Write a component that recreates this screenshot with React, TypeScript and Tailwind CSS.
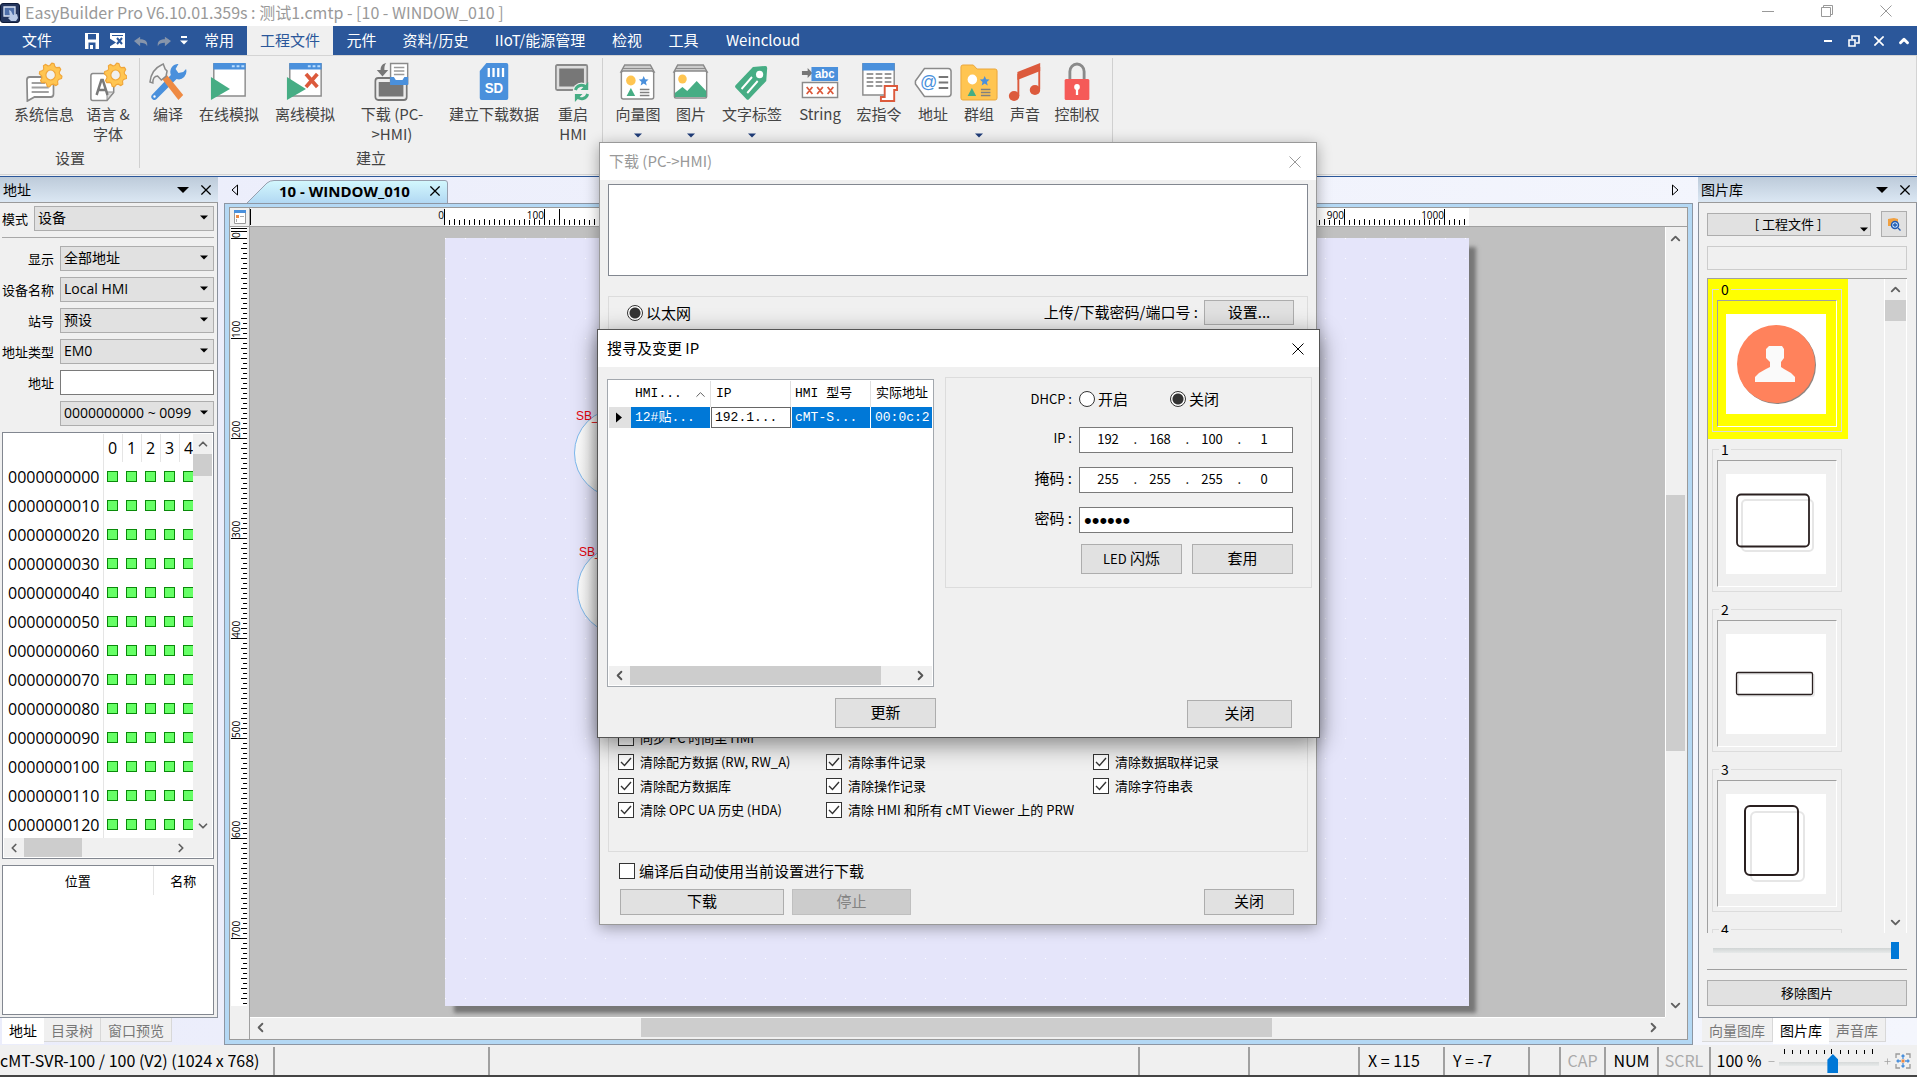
import type { ReactNode } from 'react';
import { ChevronDown, ChevronLeft, ChevronRight, ChevronUp, Minus, Plus } from 'lucide-react';

// outline of an eight-toothed wheel around the origin
const gearOutline = Array.from({ length: 32 }, (_, i) => {
  const angle = (i / 32) * Math.PI * 2 + 0.1;
  const radius = i % 4 < 2 ? 12 : 9.5;
  return `${(Math.cos(angle) * radius).toFixed(1)} ${(Math.sin(angle) * radius).toFixed(1)}`;
}).join('L');

function Gear({ x, y }: { x: number; y: number }) {
  return (
    <g transform={`translate(${x} ${y})`} stroke="#f0a63a" strokeLinejoin="round">
      <path d={`M${gearOutline}Z`} fill="#ffc551" strokeWidth="1.2" />
      <circle r="5" fill="#f0f0f0" strokeWidth="1.2" />
    </g>
  );
}

function Cross({ size, weight = 1 }: { size: number; weight?: number }) {
  return (
    <svg width={size} height={size} viewBox="0 0 12 12" fill="none" stroke="currentColor">
      <path d="M.5 .5l11 11M11.5 .5l-11 11" strokeWidth={weight} />
    </svg>
  );
}

function Shapes() {
  return (
    <>
      <path d="M26 14l1.5 3.3 3.6.3-2.8 2.3.9 3.5-3.2-1.9-3.2 1.9.9-3.5-2.8-2.3 3.6-.3z" fill="#4a90dc" />
      <path d="M12.5 26l4.5 8H8z" fill="#46ad84" />
      <path d="M22 27.5h10M22 30.5h10M22 33.5h10" stroke="#808080" strokeWidth="1.6" />
    </>
  );
}

const icons: Record<string, ReactNode> = {
  info: (
    <>
      <path d="M2 18a3 3 0 0 1 3-3h22a3 3 0 0 1 3 3v14a3 3 0 0 1-3 3H10l-7.500 4z" fill="#fff" stroke="#8a8a8a" strokeWidth="1.8" />
      <path d="M7 21h14M7 25.500h18M7 30h18" stroke="#a0a0a0" strokeWidth="1.8" />
      <Gear x={27} y={13} />
    </>
  ),
  language: (
    <>
      <path d="M2 13.500a2 2 0 0 1 2-2h22v19l-7 8H4a2 2 0 0 1-2-2z" fill="#fff" stroke="#8a8a8a" strokeWidth="1.600" />
      <path d="M26 30l-7 8v-8z" fill="#ddd" stroke="#8a8a8a" />
      <path d="M8 33l5-15h1.500l5 15M10 28h7.500" fill="none" stroke="#7a7a7a" strokeWidth="2.600" />
      <Gear x={28} y={13} />
    </>
  ),
  compile: (
    <>
      <path d="M4 37.500a3.200 3.200 0 0 1-1-4.500L23 13a8 8 0 0 1 8-11l-3 5 3 4 5-1 3-3a8 8 0 0 1-10 10L8 37a3.200 3.200 0 0 1-4 .5z" fill="#4a90dc" />
      <circle cx="5.800" cy="34.500" r="1.200" fill="#fff" />
      <path d="M13 16l5-4 18 21-5 5z" fill="#ee8a43" />
      <path d="M1 20c1-8 5-14 12-17l2-1 2 5 2 2-1 5-5 4-4-4c-3 0-5 2-5 7z" fill="#f4f4f4" stroke="#8a8a8a" strokeWidth="1.600" />
    </>
  ),
  online: (
    <>
      <path d="M4 2h33v32H4z" fill="#fff" stroke="#8a8a8a" strokeWidth="1.500" />
      <path d="M3.500 1h34v6.500h-34z" fill="#4a90dc" />
      <path d="M23 4.300h3M28 4.300h3M33 4.300h3" stroke="#b8dcff" strokeWidth="2" />
      <path d="M1 15l20 12L1 38z" fill="#46ad84" />
    </>
  ),
  offline: (
    <>
      <path d="M4 2h33v32H4z" fill="#fff" stroke="#8a8a8a" strokeWidth="1.500" />
      <path d="M3.500 1h34v6.500h-34z" fill="#4a90dc" />
      <path d="M23 4.300h3M28 4.300h3M33 4.300h3" stroke="#b8dcff" strokeWidth="2" />
      <path d="M1 15l20 12L1 38z" fill="#46ad84" />
      <path d="M21 12l12 13M33 12L21 25" stroke="#dc5a3c" strokeWidth="4" />
    </>
  ),
  download: (
    <>
      <rect x="2.500" y="16" width="33" height="22" rx="3" fill="#ececec" stroke="#777" strokeWidth="1.800" />
      <rect x="6" y="20" width="26" height="14.500" fill="#777" />
      <path d="M18.500 1.500h18v20h-18z" fill="#fff" stroke="#8a8a8a" strokeWidth="1.500" />
      <path d="M22 5.500h11M22 9h11M22 12.500h11" stroke="#9a9a9a" strokeWidth="1.500" />
      <path d="M18 15h4l2 3h7l2-3h4v8H18z" fill="#4a90dc" />
      <path d="M14 1C9 2 8 5 8 8H4l6 6.500L16 8h-4c0-3 0-5 2-7z" fill="#777" />
    </>
  ),
  sd: (
    <>
      <path d="M12 1h21a2 2 0 0 1 2 2v33a2 2 0 0 1-2 2H7a2 2 0 0 1-2-2V9z" fill="#4a90dc" />
      <path d="M14.500 6v9M19.500 6v9M24.500 6v9M29.500 6v9" stroke="#fff" strokeWidth="2.400" />
      <text x="20" y="31.500" textAnchor="middle" fontSize="14" fontWeight="700" fontFamily="Liberation Sans, sans-serif" fill="#fff">SD</text>
    </>
  ),
  restart: (
    <>
      <rect x="2" y="3" width="33" height="25" rx="1.500" fill="#ddd" stroke="#8a8a8a" strokeWidth="1.800" />
      <rect x="5.500" y="6.500" width="26" height="18" fill="#777" />
      <circle cx="29" cy="30" r="9.500" fill="#f0f0f0" />
      <path d="M22.500 28a6.800 6.800 0 0 1 11-3M35.500 32a6.800 6.800 0 0 1-11 3" fill="none" stroke="#46ad84" strokeWidth="3" />
      <path d="M36 20v8h-8zM22 40v-8h8z" fill="#46ad84" />
    </>
  ),
  vector: (
    <>
      <path d="M6 3h27l4 7H2z" fill="#ccc" stroke="#8a8a8a" strokeWidth="1.500" />
      <path d="M4 6.500h31" stroke="#8a8a8a" />
      <rect x="2.500" y="9" width="34" height="28" rx="2" fill="#fff" stroke="#8a8a8a" strokeWidth="1.500" />
      <circle cx="12.500" cy="18.500" r="5" fill="#ffc551" />
      <Shapes />
    </>
  ),
  picture: (
    <>
      <path d="M6 3h27l4 7H2z" fill="#ccc" stroke="#8a8a8a" strokeWidth="1.500" />
      <path d="M4 6.500h31" stroke="#8a8a8a" />
      <rect x="2.500" y="9" width="34" height="27" rx="1.500" fill="#fff" stroke="#8a8a8a" strokeWidth="1.500" />
      <circle cx="11" cy="17" r="4.500" fill="#ffc551" />
      <path d="M3 31l8-6 5 4 10-10 10 10v6H3z" fill="#46ad84" />
    </>
  ),
  tag: (
    <>
      <path d="M21 5l13-1a2 2 0 0 1 2 2l-1 13-18 18a2 2 0 0 1-3 0L3 26a2 2 0 0 1 0-3z" fill="#46ad84" />
      <circle cx="28" cy="12.500" r="3.800" fill="#fff" />
      <path d="M9 27l11-12M15 31l11-12" stroke="#fff" strokeWidth="2" />
    </>
  ),
  text: (
    <>
      <path d="M1 9h6V6l5 5-5 5v-3H1z" fill="#777" />
      <path d="M11 5h28v14H11z" fill="#4a90dc" />
      <text x="25" y="16" textAnchor="middle" fontSize="12" fontWeight="700" fontFamily="Liberation Sans, sans-serif" fill="#fff">abc</text>
      <path d="M1.500 20.500h37v15h-37z" fill="#fff" stroke="#8a8a8a" strokeWidth="1.500" />
      <path d="M6 25l6 7M12 25l-6 7M17 25l6 7M23 25l-6 7M28 25l6 7M34 25l-6 7" stroke="#dc5a3c" strokeWidth="1.900" />
    </>
  ),
  macro: (
    <>
      <path d="M3 2h33v31H3z" fill="#fff" stroke="#8a8a8a" strokeWidth="1.500" />
      <path d="M2.500 1h34v7.500h-34z" fill="#4a90dc" />
      <path d="M7 12h26M7 16h26M7 20h26M7 24h17" stroke="#999" strokeWidth="1.800" strokeDasharray="7 2.500" />
      <path d="M26 24h13v4h-3v11H22v-4h4z" fill="#fff" stroke="#dc5a3c" strokeWidth="2" />
    </>
  ),
  address: (
    <>
      <path d="M11 6.500h25a3 3 0 0 1 3 3v22a3 3 0 0 1-3 3H11L1.500 22v-3z" fill="#fff" stroke="#8a8a8a" strokeWidth="1.600" />
      <text x="15.500" y="26" textAnchor="middle" fontSize="18" fontFamily="Liberation Sans, sans-serif" fill="#4a90dc">@</text>
      <path d="M26 15h10M26 20.500h10M26 26h10" stroke="#777" strokeWidth="2" />
    </>
  ),
  group: (
    <>
      <path d="M1 5a2 2 0 0 1 2-2h11l4 4h19a2 2 0 0 1 2 2v27a2 2 0 0 1-2 2H3a2 2 0 0 1-2-2z" fill="#ffc551" stroke="#eaa63a" />
      <circle cx="13" cy="17.500" r="5" fill="#fff" />
      <Shapes />
    </>
  ),
  sound: (
    <>
      <path d="M12 10L36 1v8l-24 9z" fill="#dc5a3c" />
      <path d="M13 12v22M35 5v22" stroke="#dc5a3c" strokeWidth="2" />
      <ellipse cx="8.500" cy="34" rx="5.500" ry="5" fill="#dc5a3c" />
      <ellipse cx="30.500" cy="28" rx="5.500" ry="5" fill="#dc5a3c" />
    </>
  ),
  lock: (
    <>
      <path d="M12.500 19V9.500a7.500 7.500 0 0 1 15 0V19" fill="none" stroke="#8a8a8a" strokeWidth="3" />
      <rect x="7" y="17" width="26" height="21" rx="1.500" fill="#f55a58" />
      <circle cx="20" cy="25" r="3" fill="#fff" />
      <path d="M20 25v8" stroke="#fff" strokeWidth="2.400" />
    </>
  ),
};

type Tool = { icon: string; label: ReactNode; width: string; menu?: boolean };

const groups: { title: string; className: string; tools: Tool[] }[] = [
  {
    title: '设置',
    className: 'pl-2 pr-[3px]',
    tools: [
      { icon: 'info', label: '系统信息', width: 'w-[72px]' },
      { icon: 'language', label: <>语言 &amp;<br />字体</>, width: 'w-14' },
    ],
  },
  {
    title: '建立',
    className: 'pl-[6px] pr-[2px]',
    tools: [
      { icon: 'compile', label: '编译', width: 'w-11' },
      { icon: 'online', label: '在线模拟', width: 'w-[78px]' },
      { icon: 'offline', label: '离线模拟', width: 'w-[74px]' },
      { icon: 'download', label: <>下载 (PC-<br />&gt;HMI)</>, width: 'w-[100px]' },
      { icon: 'sd', label: '建立下载数据', width: 'w-[104px]' },
      { icon: 'restart', label: <>重启<br />HMI</>, width: 'w-[54px]' },
    ],
  },
  {
    title: '',
    className: 'pl-2 pr-[11px]',
    tools: [
      { icon: 'vector', label: '向量图', width: 'w-[54px]', menu: true },
      { icon: 'picture', label: '图片', width: 'w-[52px]', menu: true },
      { icon: 'tag', label: '文字标签', width: 'w-[70px]', menu: true },
      { icon: 'text', label: 'String', width: 'w-[66px]' },
      { icon: 'macro', label: '宏指令', width: 'w-[52px]' },
      { icon: 'address', label: '地址', width: 'w-14' },
      { icon: 'group', label: '群组', width: 'w-9', menu: true },
      { icon: 'sound', label: '声音', width: 'w-14' },
      { icon: 'lock', label: '控制权', width: 'w-12' },
    ],
  },
];

function Caret({ className = '' }: { className?: string }) {
  return (
    <svg viewBox="0 0 10 5" className={`h-[5px] w-2 ${className}`}>
      <path d="M0 0h10L5 5z" fill="currentColor" />
    </svg>
  );
}

function TitleBar() {
  return (
    <header className="flex h-[26px] shrink-0 items-center bg-white text-[#999]">
      <svg viewBox="0 0 20 20" className="h-5 w-5">
        <rect x=".5" y=".5" width="19" height="19" rx="2.500" fill="#24365e" stroke="#0d1a38" />
        <path d="M4 4h11v9H4z" fill="#4f6fa8" stroke="#dbe5f5" strokeWidth="1.300" />
        <path d="M9 7l2 1 2 4 4-1 1 4-2 3h-5l-3-3 2-1z" fill="#b9cbe8" />
      </svg>
      <h1 className="ml-[5px] pb-0.5 text-base leading-6">EasyBuilder Pro V6.10.01.359s : 测试1.cmtp - [10 - WINDOW_010 ]</h1>
      <div className="ml-auto flex items-center gap-[46px] pr-[25px] pb-1">
        <button aria-label="最小化" className="h-px w-3 bg-[#999]" />
        <button aria-label="还原">
          <svg viewBox="0 0 14 14" className="h-3.5 w-3.5" fill="none" stroke="currentColor">
            <path d="M1.500 3.500h9v9h-9zM3.500 3V1.500h9v9H11" />
          </svg>
        </button>
        <button aria-label="关闭窗口"><Cross size={12} /></button>
      </div>
    </header>
  );
}

function MenuBar() {
  return (
    <nav className="flex h-[29px] shrink-0 items-stretch bg-[#2b579a] text-[15px] text-white">
      <button className="w-[74px]">文件</button>
      <div className="flex w-[117px] items-center gap-[9px] pl-[10px]">
        <button aria-label="保存">
          <svg viewBox="0 0 16 16" className="h-4 w-4">
            <path d="M1 0h14v16H1z" fill="#fff" />
            <path d="M4 1h8v5.500H4zM4.500 9.500h7V16h-7z" fill="#2b579a" />
            <path d="M6 12h3v4H6z" fill="#fff" />
          </svg>
        </button>
        <button aria-label="编译并模拟">
          <svg viewBox="0 0 16 16" className="h-4 w-4">
            <path d="M1 0h15v15H1z" fill="#fff" />
            <path d="M0 5l7 4.500L0 14zM3 2h11v1H3z" fill="#2b579a" />
            <path d="M8 5l5 6M13 5l-5 6" stroke="#2b579a" strokeWidth="2" />
          </svg>
        </button>
        <button aria-label="撤消" className="text-[#8795ab]">
          <svg viewBox="0 0 16 16" className="h-4 w-3.5" fill="currentColor"><path d="M0 8l7-5v3c6 0 9 3 8 8-1-3-4-4-8-4v4z" /></svg>
        </button>
        <button aria-label="重做" className="text-[#8795ab]">
          <svg viewBox="0 0 16 16" className="h-4 w-3.5" fill="currentColor"><path d="M16 8L9 3v3C3 6 0 9 1 14c1-3 4-4 8-4v4z" /></svg>
        </button>
        <button aria-label="自定义工具栏" className="flex flex-col items-center gap-0.5">
          <span className="h-0.5 w-1.5 bg-white" />
          <Caret />
        </button>
      </div>
      <button className="w-14">常用</button>
      <button className="w-[86px] bg-[#f0f0f0] text-[#2b579a]">工程文件</button>
      <button className="w-[57px]">元件</button>
      <button className="w-[91px]">资料/历史</button>
      <button className="w-[118px]">IIoT/能源管理</button>
      <button className="w-14">检视</button>
      <button className="w-[57px]">工具</button>
      <button className="w-[102px]">Weincloud</button>
      <div className="ml-auto flex items-center gap-[13px] pr-[6px]">
        <button aria-label="最小化文档" className="h-0.5 w-2 bg-white" />
        <button aria-label="还原文档" className="ml-0.5">
          <svg viewBox="0 0 14 14" className="h-3.5 w-3.5" fill="none" stroke="#fff" strokeWidth="1.600">
            <path d="M2 6h6v6H2zM5 5V2h7v7h-3" />
          </svg>
        </button>
        <button aria-label="关闭文档"><Cross size={10} weight={2} /></button>
        <button aria-label="收起功能区"><ChevronUp size={14} strokeWidth={5} /></button>
      </div>
    </nav>
  );
}

function Ribbon() {
  return (
    <section className="flex h-[122px] shrink-0 border-b border-[#2b579a] bg-[#f0f0f0] text-[15px] text-[#444]">
      <div className="mb-px flex flex-1 border-y border-r border-[#d4d4d4] pt-0.5 pb-1.5">
        {groups.map((group, i) => (
          <div key={i} className={`flex flex-col border-r border-[#d0d0d0] ${group.className}`}>
            <div className="flex flex-1">
              {group.tools.map((tool) => (
                <button key={tool.icon} className={`flex shrink-0 flex-col items-center pt-1 ${tool.width}`}>
                  <svg viewBox="0 0 40 40" className="h-10 w-[38px] shrink-0" preserveAspectRatio="none">{icons[tool.icon]}</svg>
                  <span className="mt-0.5 leading-5 whitespace-nowrap">{tool.label}</span>
                  {tool.menu && <Caret className="mt-[9px] text-[#1f3c78]" />}
                </button>
              ))}
            </div>
            <h2 className="h-5 pr-1 text-center leading-5">{group.title}</h2>
          </div>
        ))}
      </div>
    </section>
  );
}

function PanelHeader({ title }: { title: string }) {
  return (
    <div className="flex h-[26px] shrink-0 items-center border-b border-[#9a9a9a] bg-linear-to-b from-[#bdcbda] to-[#dbe7f3] pr-[7px] pl-[3px] text-sm">
      <h2 className="pb-0.5">{title}</h2>
      <button aria-label={`${title}选项`} className="ml-auto">
        <svg viewBox="0 0 12 6" className="h-1.5 w-3"><path d="M0 0h12L6 6z" /></svg>
      </button>
      <button aria-label={`关闭${title}`} className="ml-3"><Cross size={10} weight={1.5} /></button>
    </div>
  );
}

function Select({ id, value, label }: { id: string; value: string; label?: string }) {
  return (
    <div className="grid min-w-0 flex-1 items-center">
      <select id={id} aria-label={label} className="col-start-1 row-start-1 h-[25px] w-full min-w-0 appearance-none border border-[#adadad] bg-[#e1e1e1] pb-px pl-[3px] font-['Open_Sans','Noto_Sans_CJK_SC',sans-serif] text-sm leading-5">
        <option>{value}</option>
      </select>
      <Caret className="pointer-events-none col-start-1 row-start-1 mr-1.5 mb-0.5 justify-self-end" />
    </div>
  );
}

const fields = [
  { id: 'display', label: '显示', value: '全部地址' },
  { id: 'device', label: '设备名称', value: 'Local HMI' },
  { id: 'station', label: '站号', value: '预设' },
  { id: 'addressType', label: '地址类型', value: 'EM0' },
];

const addressRows = Array.from({ length: 13 }, (_, i) => String(i * 10).padStart(10, '0'));

function AddressPanel() {
  return (
    <aside className="flex w-[218px] shrink-0 flex-col">
      <PanelHeader title="地址" />
      <div className="flex min-h-0 flex-1 flex-col border-r border-b border-[#8a919c] bg-[#f0f0f0] pt-[3px] pr-[3px] pb-0.5 pl-0.5 text-[13px]">
        <div className="flex items-center border-b border-[#a8a8a8] pb-1.5">
          <label htmlFor="mode" className="w-8">模式</label>
          <Select id="mode" value="设备" />
        </div>
        <div className="flex flex-col gap-1.5 pt-2 pb-1.5">
          {fields.map((field) => (
            <div key={field.id} className="flex items-center">
              <label htmlFor={field.id} className="w-[58px] shrink-0 pr-1.5 text-right whitespace-nowrap">{field.label}</label>
              <Select id={field.id} value={field.value} />
            </div>
          ))}
          <div className="flex items-center">
            <label htmlFor="address" className="w-[58px] shrink-0 pr-1.5 text-right">地址</label>
            <input id="address" className="h-[25px] min-w-0 flex-1 border border-[#7a7a7a] bg-white px-1" />
          </div>
          <div className="flex pl-[58px]">
            <Select id="range" value="0000000000 ~ 0099" label="地址范围" />
          </div>
        </div>
        <div className="shrink-0 border border-[#828790] bg-white p-px font-['Open_Sans',sans-serif]">
          <div className="flex h-[404px]">
            <div className="flex-1 overflow-hidden">
              <table className="w-[208px] table-fixed border-collapse text-base leading-5">
                <thead>
                  <tr className="h-7">
                    <th className="w-[99px] border-r border-[#e5e5e5]" />
                    {[0, 1, 2, 3, 4].map((n) => (
                      <th key={n} className="w-[19px] border-r border-[#e5e5e5] p-0 font-normal">{n}</th>
                    ))}
                    <th />
                  </tr>
                </thead>
                <tbody>
                  {addressRows.map((row) => (
                    <tr key={row} className="h-[29px]">
                      <th className="border-r border-[#e5e5e5] p-0 pr-[3px] text-right font-normal">{row}</th>
                      {[0, 1, 2, 3, 4].map((n) => (
                        <td key={n} className="p-0">
                          <div className="mx-auto h-[11px] w-[11px] border border-[#0a8a0a] bg-[#66ff66]" />
                        </td>
                      ))}
                      <td />
                    </tr>
                  ))}
                </tbody>
              </table>
            </div>
            <div className="flex w-[19px] flex-col items-center bg-[#f0f0f0] text-[#606060]">
              <button aria-label="向上" className="flex h-5 items-center"><ChevronUp size={14} strokeWidth={3} /></button>
              <div className="h-[22px] w-full bg-[#cdcdcd]" />
              <button aria-label="向下" className="mt-auto flex h-6 items-center"><ChevronDown size={14} strokeWidth={3} /></button>
            </div>
          </div>
          <div className="flex h-[19px] items-center bg-[#f0f0f0] text-[#606060]">
            <button aria-label="向左" className="flex w-5 justify-center"><ChevronLeft size={14} strokeWidth={3} /></button>
            <div className="h-[19px] w-[58px] bg-[#cdcdcd]" />
            <button aria-label="向右" className="mr-6 ml-auto"><ChevronRight size={14} strokeWidth={3} /></button>
          </div>
        </div>
        <div className="mt-1.5 min-h-0 flex-1 border border-[#828790] bg-white">
          <table className="w-full table-fixed border-collapse">
            <thead>
              <tr className="h-[29px]">
                <th className="w-[150px] border-r border-[#e5e5e5] p-0 font-normal">位置</th>
                <th className="p-0 font-normal">名称</th>
              </tr>
            </thead>
          </table>
        </div>
      </div>
      <PanelTabs tabs={['地址', '目录树', '窗口预览']} active="地址" className="pl-0.5" />
    </aside>
  );
}

function PanelTabs({ tabs, active, className }: { tabs: string[]; active: string; className: string }) {
  return (
    <div className={`flex h-[27px] shrink-0 text-sm leading-6 whitespace-nowrap ${className}`}>
      {tabs.map((tab) => (
        <button
          key={tab}
          className={tab === active ? 'h-[26px] bg-white px-[7px] pb-0.5' : 'h-6 border-r border-b border-[#d8d8d8] bg-[#f0f0f0] px-[7px] text-[#777]'}
        >
          {tab}
        </button>
      ))}
    </div>
  );
}

function HorizontalRuler() {
  const ticks = Array.from({ length: 205 }, (_, i) => i * 5);
  return (
    <svg width="1240" height="18" className="block">
      <path d="M195 0h1024v18H195z" fill="#fff" />
      <path d="M.5 1v16M309.500 1v12" stroke="#000" />
      {ticks.map((t) => (
        <path key={t} d={`M${194.5 + t} ${t % 100 === 0 ? 1 : t % 10 === 0 ? 11 : 12}V17`} stroke="#000" />
      ))}
      {ticks.filter((t) => t % 100 === 0).map((t) => (
        <text key={t} x={194 + t} y="11" textAnchor="end" fontSize="10" fontFamily="Open Sans, sans-serif">{t}</text>
      ))}
    </svg>
  );
}

function VerticalRuler() {
  const ticks = Array.from({ length: 154 }, (_, i) => i * 5);
  return (
    <svg width="19" height="779" className="block">
      <path d="M1 0h16v779H1z" fill="#fff" />
      <path d="M1 1.500h16M1 4.500h16" stroke="#000" />
      {ticks.map((t) => (
        <path key={t} d={`M${t % 100 === 0 ? 1 : t % 10 === 0 ? 11 : 13} ${11.5 + t}H17`} stroke="#000" />
      ))}
      {ticks.filter((t) => t % 100 === 0).map((t) => (
        <text key={t} transform={`translate(10 ${11 + t}) rotate(-90)`} fontSize="10" fontFamily="Open Sans, sans-serif">{t}</text>
      ))}
    </svg>
  );
}

function Workspace() {
  return (
    <main className="mr-[5px] ml-1.5 flex min-w-0 flex-1 flex-col">
      <div className="flex h-[26px] shrink-0 items-center">
        <button aria-label="上一个标签" className="w-[23px] pl-[7px]">
          <svg viewBox="0 0 8 12" className="h-3 w-2" fill="none" stroke="#000"><path d="M6.500 1v10L1 6z" /></svg>
        </button>
        <div className="grid w-[201px] items-center self-stretch pt-[3px]">
          <svg viewBox="0 0 201 23" className="col-start-1 row-start-1 h-[23px] w-full">
            <defs>
              <linearGradient id="tab" x1="0" y1="0" x2="0" y2="1">
                <stop offset="0" stopColor="#d3f8fd" />
                <stop offset="1" stopColor="#b2d8f3" />
              </linearGradient>
            </defs>
            <path d="M0 23L20 3Q23 .5 27 .5H198Q200.500 .5 200.500 3V23" fill="url(#tab)" stroke="#979fae" />
          </svg>
          <div className="col-start-1 row-start-1 flex items-center pr-[8px] pb-0.5 pl-8">
            <button className="font-['Open_Sans',sans-serif] text-[15px] leading-5 font-bold">10 - WINDOW_010</button>
            <button aria-label="关闭标签" className="ml-auto"><Cross size={10} weight={1.5} /></button>
          </div>
        </div>
        <button aria-label="下一个标签" className="mr-[14px] ml-auto">
          <svg viewBox="0 0 8 12" className="h-3 w-2" fill="none" stroke="#000"><path d="M1.500 1v10L7 6z" /></svg>
        </button>
      </div>
      <div className="flex min-h-0 flex-1 border border-[#8d96a3] bg-[#b4d8f4] px-1 pt-[3px] pb-1">
        <div className="grid min-w-0 flex-1 grid-cols-[20px_minmax(0,1fr)_22px] grid-rows-[19px_minmax(0,1fr)_22px] border border-[#9a9a9a] bg-[#f0f0f0]">
          <div className="flex items-center justify-center border-r border-b border-[#a0a0a0]">
            <svg viewBox="0 0 12 14" className="h-3.5 w-3">
              <path d="M.5 .5h11v13H.5z" fill="#fff" stroke="#9a9a9a" />
              <path d="M0 0h12v3H0z" fill="#4a90dc" />
              <path d="M2 5h3v3H2z" fill="#ee8a43" />
              <path d="M6 6.500h4M2.500 9v3" stroke="#aaa" />
            </svg>
          </div>
          <div className="col-span-2 overflow-hidden border-b border-[#a0a0a0]"><HorizontalRuler /></div>
          <div className="row-span-2 overflow-hidden border-r border-[#a0a0a0]"><VerticalRuler /></div>
          <div className="overflow-hidden bg-[#c0c0c0] pt-[11px] pl-[195px]">
            <div className="relative h-[768px] w-[1024px] bg-[#e5e5fa] bg-[conic-gradient(from_270deg_at_1px_1px,#fff_90deg,transparent_90deg)] bg-size-[20px_20px] shadow-[8px_8px_4px_-1px_#777]">
              <div className="absolute top-[170px] left-[129px] h-[90px] w-[90px] rounded-full border border-[#7db9ee] bg-linear-to-br from-white via-[#f6f6f6] to-[#aaa]" />
              <span className="absolute top-[170px] left-[131px] font-['Liberation_Sans',sans-serif] text-xs leading-4 text-red-600">SB_0</span>
              <div className="absolute top-[307px] left-[132px] h-[90px] w-[90px] rounded-full border border-[#7db9ee] bg-linear-to-br from-white via-[#f6f6f6] to-[#aaa]" />
              <span className="absolute top-[306px] left-[134px] font-['Liberation_Sans',sans-serif] text-xs leading-4 text-red-600">SB_1</span>
            </div>
          </div>
          <div className="flex flex-col items-center border-l border-white pr-0.5 text-[#606060]">
            <button aria-label="画布向上" className="flex h-[22px] shrink-0 items-center"><ChevronUp size={15} strokeWidth={3} /></button>
            <div className="mt-[246px] h-64 w-full bg-[#cdcdcd]" />
            <button aria-label="画布向下" className="mt-auto flex h-6 shrink-0 items-center"><ChevronDown size={15} strokeWidth={3} /></button>
          </div>
          <div className="flex items-center border-t border-white pb-0.5 text-[#606060]">
            <button aria-label="画布向左" className="flex w-5 justify-center"><ChevronLeft size={15} strokeWidth={3} /></button>
            <div className="ml-[371px] h-[19px] w-[631px] bg-[#cdcdcd]" />
            <button aria-label="画布向右" className="ml-auto flex w-6 justify-center"><ChevronRight size={15} strokeWidth={3} /></button>
          </div>
        </div>
      </div>
    </main>
  );
}

const pictures: ReactNode[] = [
  <>
    <circle cx="51" cy="51" r="39" fill="#8f8580" />
    <circle cx="50" cy="50" r="39" fill="#ff825c" />
    <path d="M43 32h13l2 3v9l-3 4v5l3 2 7 4 4 4v5H29v-5l4-4 7-4 4-2v-5l-4-4v-9z" fill="#fafafa" />
  </>,
  <>
    <rect x="16" y="26" width="71" height="51" rx="4" fill="none" stroke="#e6e6e6" strokeWidth="2" />
    <rect x="11" y="20.500" width="72" height="52" rx="4" fill="none" stroke="#2a2020" strokeWidth="1.800" />
  </>,
  <>
    <rect x="12" y="40" width="76" height="22" rx="1.500" fill="none" stroke="#e6e6e6" strokeWidth="1.500" />
    <rect x="10.500" y="38.500" width="76" height="22" rx="1.500" fill="none" stroke="#2a2020" strokeWidth="1.300" />
  </>,
  <>
    <rect x="25" y="18" width="53" height="69" rx="5" fill="none" stroke="#e6e6e6" strokeWidth="2" />
    <rect x="19" y="12" width="53" height="69" rx="5" fill="none" stroke="#2a2020" strokeWidth="2" />
  </>,
  <rect x="11" y="20" width="72" height="52" rx="4" fill="none" stroke="#2a2020" />,
];

function PicturePanel() {
  return (
    <aside className="flex w-[219px] shrink-0 flex-col">
      <PanelHeader title="图片库" />
      <div className="flex min-h-0 flex-1 flex-col border-x border-b border-[#8a919c] bg-[#f0f0f0] pr-[9px] pb-[11px] pl-2 text-[13px]">
        <div className="flex items-center justify-between pt-2">
          <button className="flex h-[23px] w-[164px] items-center border border-[#adadad] bg-[#e1e1e1] pr-0.5">
            <span className="flex-1 pl-2">[ 工程文件 ]</span>
            <Caret className="mt-2.5" />
          </button>
          <button aria-label="查找图片" className="flex h-[26px] w-[26px] items-center justify-center border border-[#adadad] bg-[#e1e1e1]">
            <svg viewBox="0 0 14 14" className="h-3.5 w-3.5">
              <path d="M1 2l6-1 4 1v7H1z" fill="#f0a040" />
              <circle cx="8" cy="8" r="3.500" fill="#bfe0ff" stroke="#2058b0" strokeWidth="1.500" />
              <path d="M11 11l2.500 2.500M6 8h4M8 6v4" stroke="#2058b0" strokeWidth="1.300" />
            </svg>
          </button>
        </div>
        <input aria-label="图片名称" className="mt-[9px] h-6 w-full border border-[#ccc] bg-[#f0f0f0] px-1" />
        <div className="mt-2 flex min-h-0 flex-1 border-t border-l border-[#a0a0a0]">
          <div className="min-w-0 flex-1 overflow-hidden">
            {pictures.map((picture, i) => (
              <div key={i} className={`h-40 w-[140px] pl-1 ${i === 0 ? 'bg-[#ffff00]' : ''}`}>
                <fieldset className="h-[153px] w-[130px] border border-[#dcdcdc] px-1">
                  <legend className="ml-0.5 px-0.5 text-sm leading-5">{i}</legend>
                  <div className="mt-px h-[127px] border border-t-[#a0a0a0] border-r-white border-b-white border-l-[#a0a0a0] px-2 pt-[13px]">
                    <svg viewBox="0 0 100 100" className="h-[100px] w-[100px] bg-white">{picture}</svg>
                  </div>
                </fieldset>
              </div>
            ))}
          </div>
          <div className="flex w-[23px] flex-col items-center border-x border-white text-[#606060]">
            <button aria-label="图片向上" className="flex h-[21px] shrink-0 items-center"><ChevronUp size={15} strokeWidth={3} /></button>
            <div className="h-[21px] w-full bg-[#cdcdcd]" />
            <button aria-label="图片向下" className="mt-auto flex h-[22px] shrink-0 items-center"><ChevronDown size={15} strokeWidth={3} /></button>
          </div>
        </div>
        <input
          type="range"
          aria-label="缩略图大小"
          defaultValue="100"
          className="mr-2 ml-1.5 mt-2 h-[18px] appearance-none bg-[linear-gradient(#d0d4d4,#e7eaea)] bg-size-[100%_5px] bg-center bg-no-repeat [&::-webkit-slider-thumb]:h-[17px] [&::-webkit-slider-thumb]:w-2 [&::-webkit-slider-thumb]:appearance-none [&::-webkit-slider-thumb]:bg-[#0078d7]"
        />
        <hr className="mt-2.5 border-[#a0a0a0]" />
        <button className="mt-2.5 h-[26px] shrink-0 border border-[#adadad] bg-[#e1e1e1]">移除图片</button>
      </div>
      <PanelTabs tabs={['向量图库', '图片库', '声音库']} active="图片库" className="pl-1" />
    </aside>
  );
}

function StatusBar() {
  return (
    <footer className="flex h-8 shrink-0 items-stretch border-b-2 border-[#444] bg-[#f0f0f0] pt-0.5 text-base leading-[27px] whitespace-nowrap">
      <span className="w-[275px] border-r-2 border-[#a0a0a0]">cMT-SVR-100 / 100 (V2) (1024 x 768)</span>
      <span className="w-[215px] border-r-2 border-[#a0a0a0]" />
      <span className="flex-1 border-r-2 border-[#a0a0a0]" />
      <span className="w-[110px] border-r-2 border-[#a0a0a0]" />
      <span className="w-[110px] border-r-2 border-[#a0a0a0]" />
      <span className="w-[85px] border-r-2 border-[#a0a0a0] pl-2">X = 115</span>
      <span className="w-[85px] border-r-2 border-[#a0a0a0] pl-2">Y = -7</span>
      <span className="w-[31px] border-r-2 border-[#a0a0a0]" />
      <span className="w-[45px] border-r-2 border-[#a0a0a0] text-center text-[#aaa]">CAP</span>
      <span className="w-[53px] border-r-2 border-[#a0a0a0] text-center">NUM</span>
      <span className="w-[52px] border-r-2 border-[#a0a0a0] text-center text-[#aaa]">SCRL</span>
      <span className="w-[56px] text-center">100 %</span>
      <div className="flex w-[150px] items-center justify-between pr-1.5 text-[#a0a0a0]">
        <button aria-label="缩小"><Minus size={9} /></button>
        <div className="flex w-[100px] flex-col items-center">
          <svg viewBox="0 0 90 5" className="h-[5px] w-[90px]">
            <path d="M.5 0v5M8.500 1v4M16.500 1v4M24.500 1v4M32.500 1v4M40.500 1v4M47.500 0v5M56.500 1v4M64.500 1v4M72.500 1v4M80.500 1v4M88.500 0v5" stroke="#000" />
          </svg>
          <input
            type="range"
            aria-label="缩放"
            defaultValue="54"
            className="h-5 w-full appearance-none bg-[linear-gradient(#d6d9d9,#e7eaea)] bg-size-[100%_4px] bg-center bg-no-repeat [&::-webkit-slider-thumb]:h-[19px] [&::-webkit-slider-thumb]:w-[11px] [&::-webkit-slider-thumb]:appearance-none [&::-webkit-slider-thumb]:bg-[#0078d7] [&::-webkit-slider-thumb]:[clip-path:polygon(50%_0,100%_30%,100%_100%,0_100%,0_30%)]"
          />
        </div>
        <button aria-label="放大"><Plus size={9} /></button>
        <button aria-label="适合窗口">
          <svg viewBox="0 0 16 16" className="h-4 w-4" fill="none">
            <path d="M1 5V1h4M11 1h4v4M15 11v4h-4M5 15H1v-4" stroke="#9a9a9a" strokeWidth="1.300" />
            <path d="M8 2v4M8 10v4M2 8h4M10 8h4M6.500 3.500L8 2l1.500 1.500M6.500 12.500L8 14l1.500-1.500M3.500 6.500L2 8l1.500 1.500M12.500 6.500L14 8l-1.500 1.500" stroke="#4a90dc" strokeWidth="1.300" />
            <path d="M6.500 6.500h3v3h-3z" fill="#ee8a43" />
          </svg>
        </button>
      </div>
    </footer>
  );
}

function Check({ label, checked = false, large = false }: { label: string; checked?: boolean; large?: boolean }) {
  return (
    <label className={`flex items-center whitespace-nowrap ${large ? 'gap-1 text-[15px] leading-6' : 'gap-1.5 text-[13px] leading-6'}`}>
      <span className="grid">
        <input type="checkbox" defaultChecked={checked} className="peer col-start-1 row-start-1 h-4 w-4 appearance-none border border-[#333] bg-white" />
        <svg viewBox="0 0 16 16" className="pointer-events-none col-start-1 row-start-1 hidden h-4 w-4 peer-checked:block" fill="none" stroke="#333" strokeWidth="1.400">
          <path d="M3 8l3.500 3.500L13 4" />
        </svg>
      </span>
      {label}
    </label>
  );
}

function Radio({ name, label, checked = false }: { name: string; label: string; checked?: boolean }) {
  return (
    <label className="flex items-center gap-[3px] text-[15px] leading-5">
      <input
        type="radio"
        name={name}
        defaultChecked={checked}
        className="h-4 w-4 appearance-none rounded-full border border-[#333] bg-white checked:bg-[radial-gradient(circle,#333_5px,#fff_6px)]"
      />
      {label}
    </label>
  );
}

function DialogButton({ children, className, disabled = false }: { children: ReactNode; className: string; disabled?: boolean }) {
  return (
    <button disabled={disabled} className={`border border-[#adadad] bg-[#e1e1e1] pb-0.5 text-[15px] leading-5 disabled:border-[#bfbfbf] disabled:bg-[#ccc] disabled:text-[#838383] ${className}`}>
      {children}
    </button>
  );
}

function DownloadDialog() {
  return (
    <section role="dialog" aria-label="下载" className="absolute top-[142px] left-[599px] flex h-[783px] w-[718px] flex-col border border-[#999] bg-[#f0f0f0] px-2 shadow-[0_3px_14px_#0005]">
      <div className="-mx-2 flex h-[37px] shrink-0 items-center justify-between bg-white pr-[15px] pl-[9px] text-[15px] text-[#999]">
        <h2>下载 (PC-&gt;HMI)</h2>
        <button aria-label="关闭下载"><Cross size={12} /></button>
      </div>
      <textarea aria-label="下载信息" readOnly className="mt-1 h-[92px] w-full shrink-0 resize-none border border-[#828790] bg-white" />
      <div className="mt-5 flex flex-1 flex-col justify-between border border-[#dcdcdc] pb-[29px]">
        <div className="flex items-center pt-[3px] pr-[13px] pl-[18px] text-[15px]">
          <Radio name="connection" label="以太网" checked />
          <span className="mr-1.5 ml-auto">上传/下载密码/端口号 :</span>
          <DialogButton className="h-[25px] w-[90px]">设置...</DialogButton>
        </div>
        <div className="grid grid-cols-[208px_267px_1fr] pl-[9px]">
          <div className="col-span-3"><Check label="同步 PC 时间至 HMI" /></div>
          <Check label="清除配方数据 (RW, RW_A)" checked />
          <Check label="清除事件记录" checked />
          <Check label="清除数据取样记录" checked />
          <Check label="清除配方数据库" checked />
          <Check label="清除操作记录" checked />
          <Check label="清除字符串表" checked />
          <Check label="清除 OPC UA 历史 (HDA)" checked />
          <Check label="清除 HMI 和所有 cMT Viewer 上的 PRW" checked />
        </div>
      </div>
      <div className="mt-[7px] pl-[11px]"><Check label="编译后自动使用当前设置进行下载" large /></div>
      <div className="mt-1.5 mb-[9px] flex gap-2 pr-[14px] pl-3">
        <DialogButton className="h-[26px] w-[164px]">下载</DialogButton>
        <DialogButton className="h-[26px] w-[119px]" disabled>停止</DialogButton>
        <DialogButton className="ml-auto h-[26px] w-[90px]">关闭</DialogButton>
      </div>
    </section>
  );
}

function IpInput({ label, parts }: { label: string; parts: string[] }) {
  return (
    <div role="group" aria-label={label} className="flex h-[26px] w-[214px] items-center border border-[#7a7a7a] bg-white pb-0.5 pl-[5px]">
      {parts.map((part, i) => (
        <div key={i} className="flex w-[52px] items-center">
          <input aria-label={`${label} ${i + 1}`} defaultValue={part} className="w-[46px] text-center text-[13px] leading-5" />
          {i < 3 && <span className="w-1.5 text-right">.</span>}
        </div>
      ))}
    </div>
  );
}

function SearchDialog() {
  return (
    <section role="dialog" aria-label="搜寻及变更 IP" className="absolute top-[329px] left-[597px] flex h-[409px] w-[723px] flex-col border border-[#555] bg-[#f0f0f0] shadow-[0_6px_22px_#0007]">
      <div className="flex h-[37px] shrink-0 items-center justify-between bg-white pr-[15px] pl-[9px] text-[15px]">
        <h2>搜寻及变更 IP</h2>
        <button aria-label="关闭搜寻"><Cross size={12} /></button>
      </div>
      <div className="flex flex-1 justify-between pr-2 pl-[9px]">
        <div className="mt-3 flex w-[329px] flex-col items-end">
          <div className="mr-0.5 flex h-[308px] w-[327px] flex-col border border-[#a3a8ae] bg-white p-px font-['Liberation_Mono','Noto_Sans_CJK_SC',monospace] text-[13px]">
            <div className="flex-1 overflow-hidden">
              <table className="w-[323px] table-fixed border-separate border-spacing-0">
                <thead>
                  <tr className="h-[26px] text-left leading-5">
                    <th className="w-[22px]" />
                    <th className="w-20 border-r border-[#e0e0e0] p-0 pl-1 font-normal">
                      <span className="flex items-center justify-between pr-0.5">HMI...<ChevronUp size={15} strokeWidth={1.5} className="text-[#555]" /></span>
                    </th>
                    <th className="w-20 border-r border-[#e0e0e0] p-0 pl-[5px] font-normal">IP</th>
                    <th className="w-20 border-r border-[#e0e0e0] p-0 pl-1 font-normal">HMI 型号</th>
                    <th className="w-[61px] p-0 pl-[5px] font-normal whitespace-nowrap">实际地址</th>
                  </tr>
                </thead>
                <tbody>
                  <tr className="h-[21px] bg-[#0078d7] leading-[18px] text-white">
                    <td className="bg-[#e1e1e1] p-0 pl-[7px]">
                      <svg viewBox="0 0 6 10" className="h-[11px] w-1.5"><path d="M0 0l6 5-6 5z" /></svg>
                    </td>
                    <td className="border-r border-white p-0 pl-1">12#贴...</td>
                    <td className="border border-[#666] bg-white p-0 pl-[3px] text-black">192.1...</td>
                    <td className="border-x border-white p-0 pl-[3px]">cMT-S...</td>
                    <td className="p-0 pl-1">00:0c:2</td>
                  </tr>
                </tbody>
              </table>
            </div>
            <div className="flex h-[19px] items-center bg-[#f0f0f0] text-[#555]">
              <button aria-label="列表向左" className="flex w-[21px] justify-center"><ChevronLeft size={15} strokeWidth={3} /></button>
              <div className="h-[19px] w-[251px] bg-[#cdcdcd]" />
              <button aria-label="列表向右" className="mr-1 ml-auto"><ChevronRight size={15} strokeWidth={3} /></button>
            </div>
          </div>
          <DialogButton className="mt-[11px] h-[30px] w-[101px]">更新</DialogButton>
        </div>
        <div className="mt-2.5 flex w-[366px] flex-col">
          <fieldset className="h-[211px] border border-[#dcdcdc] pr-[18px] pl-[60px] text-[13px]">
            <div className="mt-[11px] flex h-5 items-center">
              <span className="w-[67px] pr-px text-right">DHCP :</span>
              <div className="ml-1.5 flex gap-[42px]">
                <Radio name="dhcp" label="开启" />
                <Radio name="dhcp" label="关闭" checked />
              </div>
            </div>
            <div className="mt-[18px] grid grid-cols-[67px_214px] items-center gap-x-1.5 gap-y-3.5">
              <span className="pr-px pb-1 text-right">IP :</span>
              <IpInput label="IP" parts={['192', '168', '100', '1']} />
              <span className="pr-px pb-1 text-right text-[15px] leading-[22px]">掩码 :</span>
              <IpInput label="掩码" parts={['255', '255', '255', '0']} />
              <label htmlFor="password" className="pr-px pb-1 text-right text-[15px] leading-[22px]">密码 :</label>
              <input id="password" type="password" defaultValue="111111" className="h-[26px] border border-[#7a7a7a] bg-white px-1 font-['Liberation_Sans',sans-serif] text-[22px]" />
            </div>
            <div className="mt-[11px] flex justify-end gap-2.5">
              <DialogButton className="h-[30px] w-[101px]"><span className="text-[13px]">LED</span> 闪烁</DialogButton>
              <DialogButton className="h-[30px] w-[101px]">套用</DialogButton>
            </div>
          </fieldset>
          <DialogButton className="mt-auto mr-[19px] mb-[9px] h-7 w-[105px] self-end">关闭</DialogButton>
        </div>
      </div>
    </section>
  );
}

export default function App() {
  return (
    <div className="relative flex h-screen flex-col overflow-hidden bg-white font-['Noto_Sans_CJK_SC',sans-serif] text-black">
      <TitleBar />
      <MenuBar />
      <Ribbon />
      <div className="flex min-h-0 flex-1 bg-linear-to-r from-[#ebedfb] to-[#f4f6fd]">
        <AddressPanel />
        <Workspace />
        <PicturePanel />
      </div>
      <StatusBar />
      <DownloadDialog />
      <SearchDialog />
    </div>
  );
}
